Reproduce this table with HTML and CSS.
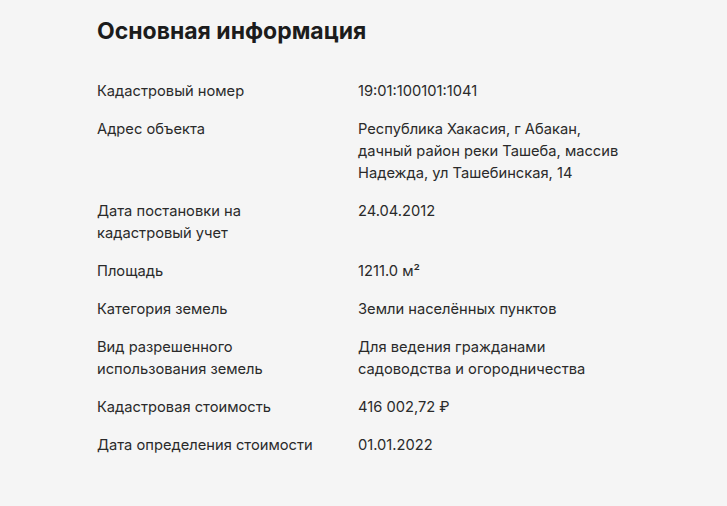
FILE: index.html
```html
<!DOCTYPE html>
<html lang="ru">
<head>
<meta charset="utf-8">
<link rel="stylesheet" href="styles.css">
</head>
<body>
<main class="info">
  <h1 class="info-title">Основная информация</h1>
  <dl class="info-list">
    <dt>Кадастровый номер</dt><dd>19:01:100101:1041</dd>
    <dt>Адрес объекта</dt><dd>Республика Хакасия, г Абакан, дачный район реки Ташеба, массив Надежда, ул Ташебинская, 14</dd>
    <dt>Дата постановки на кадастровый учет</dt><dd>24.04.2012</dd>
    <dt>Площадь</dt><dd>1211.0 м²</dd>
    <dt>Категория земель</dt><dd>Земли населённых пунктов</dd>
    <dt>Вид разрешенного использования земель</dt><dd>Для ведения гражданами садоводства и огородничества</dd>
    <dt>Кадастровая стоимость</dt><dd>416 002,72 ₽</dd>
    <dt>Дата определения стоимости</dt><dd>01.01.2022</dd>
  </dl>
</main>
</body>
</html>
```
FILE: styles.css
```css
html, body {
  margin: 0;
  padding: 0;
  background: #f5f5f5;
}
body {
  font-family: Inter, "Noto Sans", sans-serif;
  color: #2a2a2a;
}
.info {
  padding: 17px 0 0 97px;
}
.info-title {
  margin: 0 0 35px;
  font-size: 23px;
  line-height: 28px;
  font-weight: 700;
  color: #1c1c1c;
}
.info-list {
  margin: 0;
  display: grid;
  grid-template-columns: 261px 270px;
  row-gap: 16px;
  font-size: 14.7px;
  line-height: 22px;
}
.info-list dt,
.info-list dd {
  margin: 0;
}
.info-list dt {
  padding-right: 32px;
}
```
